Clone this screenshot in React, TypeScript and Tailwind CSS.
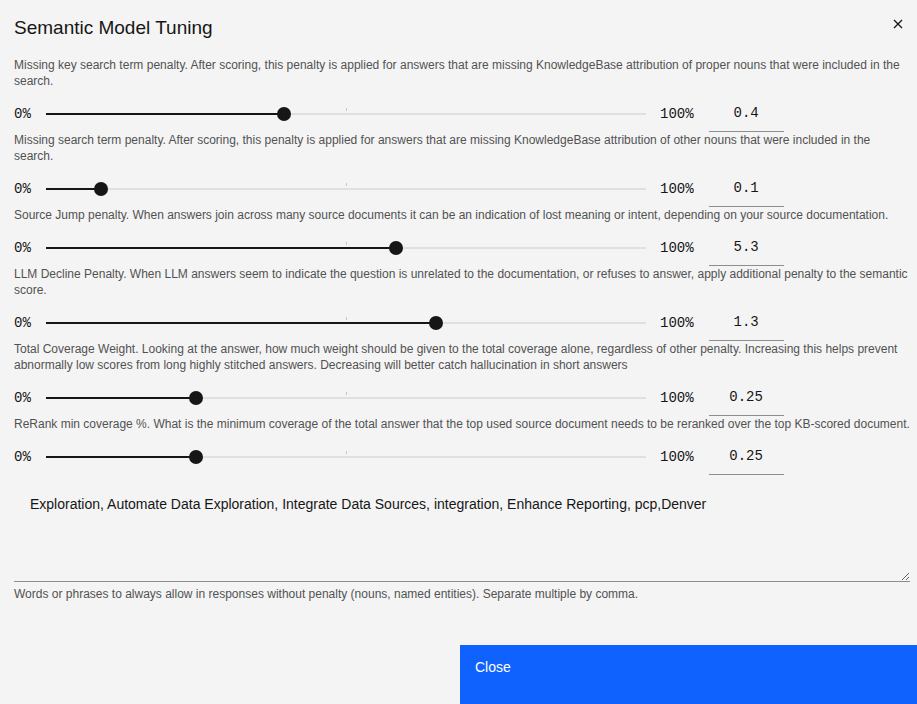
import React from "react"

const sans = "font-['Liberation_Sans',Arial,sans-serif]"
const mono = "font-['Liberation_Mono',monospace]"

const rows = [
  {
    text: "Missing key search term penalty. After scoring, this penalty is applied for answers that are missing KnowledgeBase attribution of proper nouns that were included in the search.",
    frac: 0.397,
    value: "0.4",
  },
  {
    text: "Missing search term penalty. After scoring, this penalty is applied for answers that are missing KnowledgeBase attribution of other nouns that were included in the search.",
    frac: 0.092,
    value: "0.1",
  },
  {
    text: "Source Jump penalty. When answers join across many source documents it can be an indication of lost meaning or intent, depending on your source documentation.",
    frac: 0.583,
    value: "5.3",
  },
  {
    text: "LLM Decline Penalty. When LLM answers seem to indicate the question is unrelated to the documentation, or refuses to answer, apply additional penalty to the semantic score.",
    frac: 0.65,
    value: "1.3",
  },
  {
    text: "Total Coverage Weight. Looking at the answer, how much weight should be given to the total coverage alone, regardless of other penalty. Increasing this helps prevent abnormally low scores from long highly stitched answers. Decreasing will better catch hallucination in short answers",
    frac: 0.25,
    value: "0.25",
  },
  {
    text: "ReRank min coverage %. What is the minimum coverage of the total answer that the top used source document needs to be reranked over the top KB-scored document.",
    frac: 0.25,
    value: "0.25",
  },
]

function Slider({ frac, value }: { frac: number; value: string }) {
  const px = Math.round(frac * 600)
  return (
    <div className="flex items-center h-10">
      <span className={`${mono} text-sm text-[#161616] w-[32px] leading-5 pt-[3px]`}>0%</span>
      <div className="relative w-[600px] h-[14px] mt-[3px]">
        <div className="absolute left-0 right-0 top-[6px] h-[2px] bg-[#e0e0e0]" />
        <div className="absolute left-[300px] top-[1px] w-px h-[3px] bg-[#c6c6c6]" />
        <div className="absolute left-0 top-[6px] h-[2px] bg-[#161616]" style={{ width: px }} />
        <div
          className="absolute top-0 w-[14px] h-[14px] rounded-full bg-[#161616]"
          style={{ left: px - 7 }}
        />
      </div>
      <span className={`${mono} text-sm text-[#161616] ml-[14px] leading-5 pt-[3px]`}>100%</span>
      <input
        readOnly
        value={value}
        className={`${mono} ml-[15px] w-[75px] h-10 pt-[3px] bg-transparent border-b border-[#8d8d8d] text-center text-sm text-[#161616] outline-none`}
      />
    </div>
  )
}

export default function App() {
  return (
    <div className={`${sans} h-[704px] overflow-hidden bg-[#f4f4f4] relative flex flex-col`}>
      {/* Header */}
      <div className="pt-[14px] px-[14px]">
        <h2 className="text-[19px] leading-7 text-[#161616] font-normal">Semantic Model Tuning</h2>
      </div>
      <button className="absolute top-[18px] right-[14px] w-[11px] h-[11px] flex items-center justify-center">
        <svg width="10" height="10" viewBox="0 0 10 10" fill="none" stroke="#161616" strokeWidth="1.3">
          <path d="M1 1L9 9M9 1L1 9" />
        </svg>
      </button>

      {/* Content */}
      <div className="mt-[15px] pl-[14px] pr-[7px]">
        {rows.map((r, i) => (
          <div key={i}>
            <p className="text-xs leading-4 text-[#525252] mb-[3px]">{r.text}</p>
            <Slider frac={r.frac} value={r.value} />
          </div>
        ))}

        <textarea
          defaultValue="Exploration, Automate Data Exploration, Integrate Data Sources, integration, Enhance Reporting, pcp,Denver"
          className="mt-[8px] block w-full h-[99px] bg-transparent border-b border-[#8d8d8d] px-4 py-[11px] text-sm leading-5 text-[#161616] outline-none"
        />
        <p className="mt-[4px] text-xs leading-4 text-[#525252]">
          Words or phrases to always allow in responses without penalty (nouns, named entities). Separate multiple by comma.
        </p>
      </div>

      {/* Footer */}
      <div className="mt-[43px] flex justify-end">
        <button className="w-[457px] h-16 bg-[#0f62fe] text-white text-sm leading-[18px] text-left pl-[15px] pt-[13px] flex items-start">
          Close
        </button>
      </div>
    </div>
  )
}
